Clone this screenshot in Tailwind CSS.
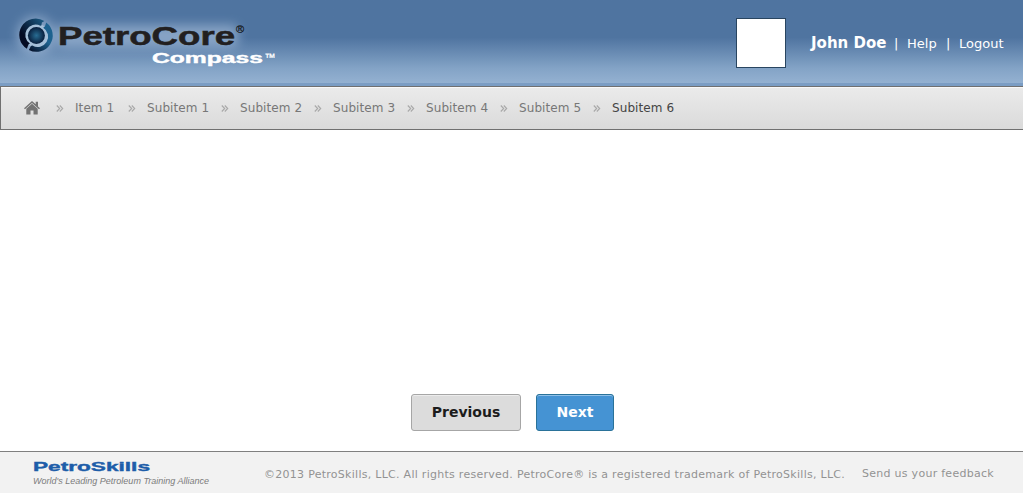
<!DOCTYPE html>
<html lang="en">
<head>
<meta charset="utf-8">
<title>PetroCore Compass</title>
<script src="https://cdn.jsdelivr.net/npm/@tailwindcss/browser@4"></script>
</head>
<body class="w-[1023px] h-[493px] overflow-hidden flex flex-col bg-white font-['DejaVu_Sans',sans-serif]">
<header class="h-[86px] shrink-0 flex items-start justify-between border-b-3 border-[#7b9dc4] bg-linear-to-b from-[#4f74a0] from-45% via-[#83a3c6] via-82% to-[#94b1d1] pr-[19px]">
  <svg class="w-[290px] h-[83px]" viewBox="0 0 290 83" role="img" aria-label="PetroCore Compass">
    <defs>
      <filter id="glow" x="-20%" y="-60%" width="140%" height="220%"><feGaussianBlur stdDeviation="5.500"/></filter>
      <linearGradient id="ringL" x1="0" y1="1" x2="1" y2="0"><stop offset=".3" stop-color="#040b22"/><stop offset="1" stop-color="#1c5f89"/></linearGradient>
      <linearGradient id="ringR" x1="0" y1="1" x2=".6" y2="0"><stop offset="0" stop-color="#040b22"/><stop offset=".6" stop-color="#1d628f"/></linearGradient>
      <radialGradient id="core"><stop offset="0" stop-color="#286d93"/><stop offset="1" stop-color="#081e3c"/></radialGradient>
    </defs>
    <g filter="url(#glow)" fill="#bfd3ea" opacity=".5">
      <circle cx="36" cy="35.500" r="19"/>
      <rect x="56" y="25" width="182" height="22" rx="6"/>
    </g>
    <g transform="translate(.4 0)">
      <circle cx="36" cy="35.500" r="12" fill="#a4bfd8"/>
      <path d="M44 21A16.300 16.300 0 0 0 26.500 48.800L28 44.500L29.500 43.500A10.300 10.300 0 0 1 40 25.800L41 25.500L41.500 22.500Z" fill="url(#ringL)"/>
      <path d="M28.500 50A16.300 16.300 0 0 0 45.800 22.500L44.500 26.500L42.800 27.800A10.300 10.300 0 0 1 32 45.500L30.500 46Z" fill="url(#ringR)"/>
      <circle cx="36" cy="35.500" r="8.500" fill="url(#core)"/>
    </g>
    <g font-family="'Liberation Sans',Arial,sans-serif" font-weight="700">
      <text x="58" y="45" font-size="25.500" textLength="177" lengthAdjust="spacingAndGlyphs" fill="#221f20" stroke="#221f20" stroke-width=".5">PetroCore</text>
      <text x="236" y="33" font-size="11" font-weight="400" fill="#111" stroke="#111" stroke-width=".2">®</text>
      <text x="152" y="62.500" font-size="14.800" textLength="111" lengthAdjust="spacingAndGlyphs" fill="#fff" stroke="#fff" stroke-width=".4">Compass</text>
      <text x="264.500" y="60.500" font-size="11" font-weight="400" fill="#fff" stroke="#fff" stroke-width=".3">™</text>
    </g>
  </svg>
  <div class="flex items-start text-[13px] leading-[18px] text-white">
    <div class="mt-[18px] w-[50px] h-[50px] border border-[#294560] bg-white mr-[24px]"></div>
    <div class="mt-[35px] flex whitespace-nowrap">
      <b class="w-[83px] ml-px -mt-px text-[15px]">John Doe</b><span class="w-[13px]">|</span><a class="w-[39px]">Help</a><span class="w-[13px]">|</span><a class="w-[45px]">Logout</a>
    </div>
  </div>
</header>
<nav class="h-[44px] shrink-0 border-y border-l border-[#707070] bg-linear-to-b from-[#ebebeb] to-[#dadada] flex items-center pl-[23px] text-[12px] text-[#777] whitespace-nowrap shadow-[inset_0_1px_0_#f8f8f8]">
  <svg class="w-[16px] h-[14px] mr-[32px]" viewBox="0 0 16 14" fill="#737373"><path d="M8 0L0 7.300L1 8.300L8 2.100L15 8.300L16 7.300L14 5.400V.7H11.700V3.300Z"/><path d="M8 2.800L2.300 7.800V13.500H6.500V9.500H9.500V13.500H13.700V7.800Z"/></svg>
  <svg class="hidden"><symbol id="sep" viewBox="0 0 8 7"><path d="M.8.5L3.700 3.500L.8 6.500M3.800.5L6.700 3.500L3.800 6.500" fill="none" stroke="#a8a8a8" stroke-width="1.100"/></symbol></svg>
  <div class="-ml-4 flex items-center tracking-[0.08px]">
    <svg class="w-2 h-[7px] mr-[11px]"><use href="#sep"/></svg><span class="w-[53px]">Item 1</span>
    <svg class="w-2 h-[7px] mr-[11px]"><use href="#sep"/></svg><span class="w-[74px]">Subitem 1</span>
    <svg class="w-2 h-[7px] mr-[11px]"><use href="#sep"/></svg><span class="w-[74px]">Subitem 2</span>
    <svg class="w-2 h-[7px] mr-[11px]"><use href="#sep"/></svg><span class="w-[74px]">Subitem 3</span>
    <svg class="w-2 h-[7px] mr-[11px]"><use href="#sep"/></svg><span class="w-[74px]">Subitem 4</span>
    <svg class="w-2 h-[7px] mr-[11px]"><use href="#sep"/></svg><span class="w-[74px]">Subitem 5</span>
    <svg class="w-2 h-[7px] mr-[11px]"><use href="#sep"/></svg><span class="text-[#444]">Subitem 6</span>
  </div>
</nav>
<main class="flex-1 flex items-end pb-5 pl-[411px] gap-[15px] text-[14px] font-bold">
  <button class="w-[110px] h-[37px] rounded-[3px] border border-[#a6a6a6] bg-[#dcdcdc] text-[#1c1c1c] shadow-[inset_0_1px_0_#ececec]">Previous</button>
  <button class="w-[78px] h-[37px] rounded-[3px] border border-[#2a7299] bg-[#4593d3] text-white shadow-[inset_0_1px_0_#8fc0e8]">Next</button>
</main>
<footer class="h-[42px] shrink-0 border-t border-[#808080] bg-[#f2f2f2] flex items-start text-[11px] leading-[14px] tracking-[0.275px] text-[#929292] whitespace-nowrap">
  <svg class="w-[264px] h-[41px] tracking-normal" viewBox="0 0 264 41" font-family="'Liberation Sans',Arial,sans-serif" role="img" aria-label="PetroSkills">
    <text x="33" y="19" font-size="12.800" font-weight="700" textLength="117" lengthAdjust="spacingAndGlyphs" fill="#1d5da9" stroke="#1d5da9" stroke-width=".4">PetroSkills</text>
    <text x="33" y="32.300" font-size="9" font-style="italic" textLength="176" lengthAdjust="spacingAndGlyphs" fill="#7c7c7c">World's Leading Petroleum Training Alliance</text>
  </svg>
  <span class="mt-4 w-[598px]">©2013 PetroSkills, LLC. All rights reserved. PetroCore® is a registered trademark of PetroSkills, LLC.</span>
  <a class="mt-[15px]">Send us your feedback</a>
</footer>
</body>
</html>
